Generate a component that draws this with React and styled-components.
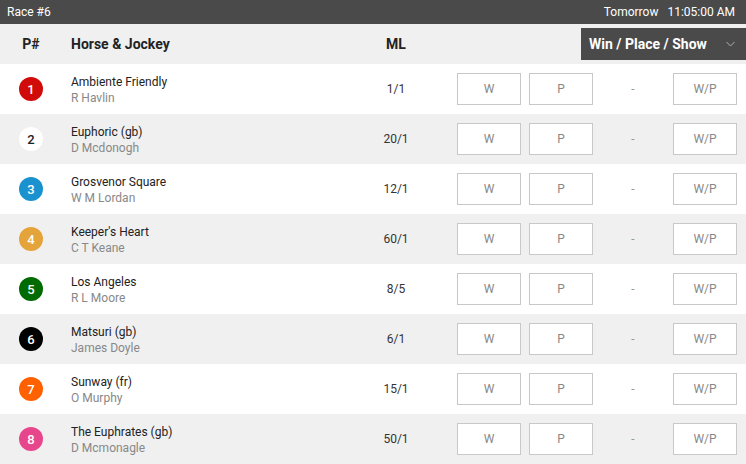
import styled, { createGlobalStyle } from "styled-components";

const GlobalStyle = createGlobalStyle`
  * { box-sizing: border-box; }
  body {
    margin: 0;
    font-family: Roboto, "Liberation Sans", Arial, sans-serif;
    background: #fff;
  }
`;

const runners = [
  { num: 1, name: "Ambiente Friendly", jockey: "R Havlin", ml: "1/1", bg: "#d10a0a", fg: "#fff" },
  { num: 2, name: "Euphoric (gb)", jockey: "D Mcdonogh", ml: "20/1", bg: "#fff", fg: "#222" },
  { num: 3, name: "Grosvenor Square", jockey: "W M Lordan", ml: "12/1", bg: "#1a92d0", fg: "#fff" },
  { num: 4, name: "Keeper's Heart", jockey: "C T Keane", ml: "60/1", bg: "#e5a43a", fg: "#fff" },
  { num: 5, name: "Los Angeles", jockey: "R L Moore", ml: "8/5", bg: "#006b00", fg: "#fff" },
  { num: 6, name: "Matsuri (gb)", jockey: "James Doyle", ml: "6/1", bg: "#000", fg: "#fff" },
  { num: 7, name: "Sunway (fr)", jockey: "O Murphy", ml: "15/1", bg: "#ff6000", fg: "#fff" },
  { num: 8, name: "The Euphrates (gb)", jockey: "D Mcmonagle", ml: "50/1", bg: "#e8468c", fg: "#fff" },
];

const columns = "62px 294px 80px 21px 64px 8px 64px 80px 64px 9px";

const Page = styled.div`
  width: 746px;
  height: 464px;
  overflow: hidden;
  background: #fff;
`;

const TopBar = styled.div`
  height: 24px;
  background: #4a4a4a;
  color: #fff;
  font-size: 12px;
  display: flex;
  align-items: center;
  justify-content: space-between;
  padding: 0 11px 0 7px;
`;

const Time = styled.span`
  margin-left: 9px;
`;

const HeaderRow = styled.div`
  height: 40px;
  background: #f0f0f0;
  display: grid;
  grid-template-columns: 62px 294px 80px 1fr;
  align-items: center;
  font-size: 14px;
  font-weight: 700;
  color: #222;
`;

const HeadCell = styled.div`
  text-align: ${(p) => p.$align || "left"};
  padding-left: ${(p) => p.$pad || 0}px;
`;

const Select = styled.div`
  justify-self: end;
  width: 165px;
  height: 32px;
  background: #4a4a4a;
  color: #fff;
  display: flex;
  align-items: center;
  justify-content: space-between;
  padding: 0 11px 0 8px;
  font-size: 14px;
  font-weight: 700;
`;

const Row = styled.div`
  height: 50px;
  background: ${(p) => (p.$alt ? "#f0f0f0" : "#fff")};
  display: grid;
  grid-template-columns: ${columns};
  align-items: center;
  font-size: 12px;
`;

const Badge = styled.div`
  justify-self: center;
  width: 24px;
  height: 24px;
  border-radius: 50%;
  background: ${(p) => p.$bg};
  color: ${(p) => p.$fg};
  display: flex;
  align-items: center;
  justify-content: center;
  font-size: 13px;
  font-weight: 500;
`;

const Horse = styled.div`
  padding: 2px 0 0 9px;
  line-height: 16px;
`;

const Name = styled.div`
  color: #222;
`;

const Jockey = styled.div`
  color: #888;
`;

const Odds = styled.div`
  text-align: center;
  color: #333;
`;

const BetButton = styled.div`
  height: 32px;
  border: 1px solid #c8c8c8;
  background: #fff;
  color: #888;
  display: flex;
  align-items: center;
  justify-content: center;
  grid-column: ${(p) => p.$col};
`;

const Dash = styled.div`
  grid-column: 8;
  text-align: center;
  color: #999;
`;

const Chevron = () => (
  <svg width="9" height="6" viewBox="0 0 9 6" fill="none">
    <path d="M0.5 1l4 4 4-4" stroke="#b0b0b0" strokeWidth="1" />
  </svg>
);

export default function App() {
  return (
    <Page>
      <GlobalStyle />
      <TopBar>
        <span>Race #6</span>
        <span>
          Tomorrow<Time>11:05:00 AM</Time>
        </span>
      </TopBar>
      <HeaderRow>
        <HeadCell $align="center">P#</HeadCell>
        <HeadCell $pad={9}>Horse &amp; Jockey</HeadCell>
        <HeadCell $align="center">ML</HeadCell>
        <Select>
          <span>Win / Place / Show</span>
          <Chevron />
        </Select>
      </HeaderRow>
      {runners.map((r, i) => (
        <Row key={r.num} $alt={i % 2 === 1}>
          <Badge $bg={r.bg} $fg={r.fg}>{r.num}</Badge>
          <Horse>
            <Name>{r.name}</Name>
            <Jockey>{r.jockey}</Jockey>
          </Horse>
          <Odds>{r.ml}</Odds>
          <BetButton $col={5}>W</BetButton>
          <BetButton $col={7}>P</BetButton>
          <Dash>-</Dash>
          <BetButton $col={9}>W/P</BetButton>
        </Row>
      ))}
    </Page>
  );
}
